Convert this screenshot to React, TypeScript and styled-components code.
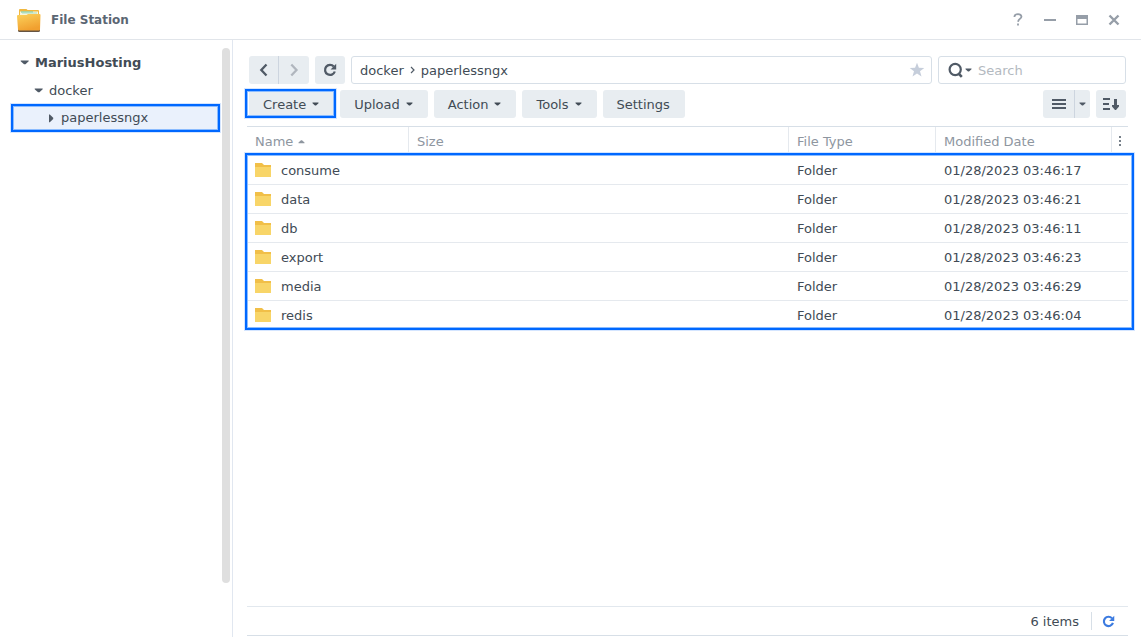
import React from "react";
import styled, { createGlobalStyle, css } from "styled-components";

const GlobalStyle = createGlobalStyle`
  * { box-sizing: border-box; }
  body {
    margin: 0;
    background: #fff;
    color: #414b55;
    font: 13px/28px Verdana, "DejaVu Sans", sans-serif;
  }
  button, input { font: inherit; color: inherit; }
  button { border: 0; margin: 0; padding: 0; background: none; cursor: pointer; }
  ul { list-style: none; margin: 0; padding: 0; }
  svg { display: block; flex: none; }
`;

const highlight = css`
  &::after {
    content: "";
    position: absolute;
    border: 2px solid #0068ff;
    box-shadow: 0 0 0 1px #d4e5ff, inset 0 0 0 1px #8bbcff;
    pointer-events: none;
  }
`;

const Label = styled.span`
  display: block;
  padding-top: 2px;
  line-height: 26px;
`;

const Window = styled.div`
  display: flex;
  flex-direction: column;
  min-height: 100vh;
`;

const TitleBar = styled.header`
  display: flex;
  align-items: center;
  height: 40px;
  padding: 0 18px 0 16px;
  border-bottom: 1px solid #e1e5ea;
`;

const Title = styled.h1`
  flex: 1;
  margin: 0 0 0 9px;
  font-size: 12px;
  line-height: 20px;
  font-weight: bold;
  color: #5b6673;
`;

const WindowControls = styled.div`
  display: flex;
  gap: 14px;
  color: #969ea8;
`;

const WindowButton = styled.button`
  display: flex;
  align-items: center;
  justify-content: center;
  width: 18px;
  height: 20px;
`;

const Body = styled.div`
  display: flex;
  flex: 1;
`;

const Sidebar = styled.nav`
  display: flex;
  flex: none;
  width: 233px;
  padding: 8px 2px 0 12px;
  border-right: 1px solid #e1e7f0;
`;

const Tree = styled.ul`
  flex: 1;
`;

const TreeItem = styled.li<{ $level: number; $selected?: boolean }>`
  position: relative;
  display: flex;
  align-items: center;
  gap: 6px;
  height: 28px;
  margin-right: 3px;
  padding-left: ${(p) => 8 + p.$level * 14}px;
  font-weight: ${(p) => (p.$level === 0 ? "bold" : "normal")};
  background: ${(p) => (p.$selected ? "#eaf1fc" : "none")};
  ${(p) => p.$selected && highlight}
  &::after { inset: 0 -1px; }
`;

const TreeLink = styled.a`
  color: inherit;
  text-decoration: none;
`;

const ScrollThumb = styled.div`
  width: 8px;
  margin-bottom: 54px;
  border-radius: 4px;
  background: #dfdfdf;
`;

const Main = styled.main`
  display: flex;
  flex: 1;
  flex-direction: column;
  min-width: 0;
  padding: 16px 13px 1px 14px;
`;

const Bar = styled.div`
  display: flex;
  gap: 6px;
  height: 28px;
  margin: 0 2px 6px;
`;

const Spacer = styled.div`
  flex: 1;
`;

const ButtonGroup = styled.div`
  display: flex;
  overflow: hidden;
  border-radius: 3px;
`;

const IconButton = styled.button<{ $width?: number; $divided?: boolean }>`
  display: flex;
  align-items: center;
  justify-content: center;
  width: ${(p) => p.$width ?? 30}px;
  height: 28px;
  border-radius: ${(p) => (p.$divided === undefined ? 3 : 0)}px;
  border-left: ${(p) => (p.$divided ? "1px solid #cdd5df" : "0")};
  background: #e8edf1;
  color: #505a66;
`;

const ToolButton = styled.button<{ $highlighted?: boolean }>`
  position: relative;
  display: flex;
  align-items: center;
  gap: 6px;
  height: 28px;
  padding: 0 15px 0 14px;
  border-radius: 3px;
  background: #e8edf1;
  ${(p) => p.$highlighted && highlight}
  &::after { inset: -1px -2px 0 -4px; }
`;

const PathField = styled.div`
  display: flex;
  flex: 1;
  align-items: center;
  gap: 6px;
  padding: 0 6px 0 8px;
  border: 1px solid #d7dfe7;
  border-radius: 3px;
`;

const SearchField = styled.label`
  display: flex;
  align-items: center;
  gap: 2px;
  width: 188px;
  padding-left: 9px;
  border: 1px solid #d7dfe7;
  border-radius: 3px;
  color: #505a66;
`;

const SearchInput = styled.input`
  flex: 1;
  min-width: 0;
  height: 26px;
  margin-left: 4px;
  padding: 2px 0 0;
  border: 0;
  outline: 0;
  background: none;
  &::placeholder { color: #b3b9c0; opacity: 1; }
`;

const TableFrame = styled.div`
  position: relative;
  margin-top: 2px;
  ${highlight}
  &::after { inset: 27px -6px 0 -2px; }
`;

const FileTable = styled.table`
  width: 100%;
  border-collapse: separate;
  border-spacing: 0;
  table-layout: fixed;
  border-top: 1px solid #d7dfe7;
`;

const HeadCell = styled.th<{ $width?: number }>`
  width: ${(p) => (p.$width ? `${p.$width}px` : "auto")};
  height: 29px;
  padding: 0 0 0 8px;
  border-right: 1px solid #e5e9ee;
  text-align: left;
  font-weight: normal;
  color: #8e969f;
  &:last-child { border-right: 0; padding-left: 7px; }
`;

const HeadLabel = styled.span`
  display: flex;
  align-items: center;
  gap: 5px;
`;

const Row = styled.tr`
  > td { border-bottom: 1px solid #e5e9ee; }
  &:last-child > td { border-bottom-color: transparent; }
`;

const Cell = styled.td`
  height: 29px;
  padding: 0 0 0 8px;
  white-space: nowrap;
`;

const FileName = styled.span`
  display: flex;
  align-items: center;
  gap: 10px;
`;

const StatusBar = styled.footer`
  display: flex;
  align-items: center;
  justify-content: flex-end;
  height: 30px;
  margin-top: auto;
  border-top: 1px solid #e2e8ee;
  border-bottom: 1px solid #d7dfe7;
`;

const Refresh = styled.button`
  display: flex;
  align-items: center;
  height: 18px;
  margin: 0 13px 0 12px;
  padding-left: 10px;
  border-left: 1px solid #d7dfe7;
  color: #3c7be0;
`;

const Caret = () => (
  <svg width="7" height="4" viewBox="0 0 7 4" fill="currentColor" aria-hidden="true">
    <path d="M.5.500h6v.7L4 3.500H3L.5 1.200z" />
  </svg>
);

const TreeArrow = ({ open }: { open: boolean }) => (
  <svg width={open ? 9 : 7} height="9" viewBox={open ? "0 0 9 9" : "0 0 7 9"} fill="#505a66" aria-hidden="true">
    <path d={open ? "M.7 2.500h8v.8L5.500 6.200H4L.7 3.300z" : "M1 .5h.8l3.400 3.200v1.200L1.800 8.200H1z"} />
  </svg>
);

const ReloadIcon = ({ size = 14 }: { size?: number }) => (
  <svg width={size} height={size} viewBox="0 0 14 14" fill="none" aria-hidden="true">
    <path d="M10.8 3.600A5 5 0 1 0 11.800 8.500" stroke="currentColor" strokeWidth="2.300" />
    <path d="M13.200.8v5.700H7.600z" fill="currentColor" />
  </svg>
);

const Chevron = ({ left }: { left?: boolean }) => (
  <svg width="10" height="14" viewBox="0 0 10 14" fill="none" stroke={left ? "#505a66" : "#b0b6be"} strokeWidth="2.300" aria-hidden="true">
    <path d={left ? "M7.500 1.500 2.300 7l5.200 5.500" : "M2.300 1.500 7.500 7l-5.200 5.500"} />
  </svg>
);

const FolderIcon = () => (
  <svg width="16" height="14" viewBox="0 0 16 14" aria-hidden="true">
    <path d="M0 0h7l2 2h7v12H0z" fill="#f1bf48" />
    <path d="M0 4h16v10H0z" fill="#f8d568" />
  </svg>
);

const AppIcon = () => (
  <svg width="26" height="26" viewBox="0 0 26 26" aria-hidden="true">
    <defs>
      <linearGradient id="folderFront" x1="0" y1="0" x2=".4" y2="1">
        <stop offset="0" stopColor="#fbd25c" />
        <stop offset="1" stopColor="#f1a02f" />
      </linearGradient>
    </defs>
    <path d="M3 3q0-1 1-1h6q1 0 1.500 1H22q1 0 1 1v6H3z" fill="#f0b840" />
    <path d="M4 4.500h18V9H4z" fill="#f7f5dc" />
    <path d="M5 4.500h12v1H5z" fill="#69c8a5" />
    <path d="M6 5.500h15v1H6z" fill="#a9dcc0" />
    <path d="M2 22h22v1.500q0 1.500-1.500 1.500h-19Q2 25 2 23.500z" fill="#655443" />
    <path d="M1 9q0-1 1-1h8.500L12 7h11.500q1 0 1 1L24 22.500q0 1-1 1H3q-1 0-1-1z" fill="url(#folderFront)" />
  </svg>
);

const tools = ["Create", "Upload", "Action", "Tools"];

const files = [
  { name: "consume", modified: "01/28/2023 03:46:17" },
  { name: "data", modified: "01/28/2023 03:46:21" },
  { name: "db", modified: "01/28/2023 03:46:11" },
  { name: "export", modified: "01/28/2023 03:46:23" },
  { name: "media", modified: "01/28/2023 03:46:29" },
  { name: "redis", modified: "01/28/2023 03:46:04" },
];

export default function App() {
  return (
    <Window>
      <GlobalStyle />
      <TitleBar>
        <AppIcon />
        <Title>File Station</Title>
        <WindowControls>
          <WindowButton aria-label="Help">
            <svg width="10" height="13" viewBox="0 0 10 13" fill="none" stroke="currentColor" strokeWidth="1.800">
              <path d="M1.500 4V3.200Q2 1.200 5 1.200T8.500 3.600Q8.500 4.800 7 5.700T5 8.800M5 10.500v2" />
            </svg>
          </WindowButton>
          <WindowButton aria-label="Minimize">
            <svg width="12" height="2" viewBox="0 0 12 2"><path d="M0 0h12v2H0z" fill="currentColor" /></svg>
          </WindowButton>
          <WindowButton aria-label="Maximize">
            <svg width="12" height="10" viewBox="0 0 12 10">
              <path d="M0 0h12v10H0zM1.500 4v4.500h9V4z" fill="currentColor" fillRule="evenodd" />
            </svg>
          </WindowButton>
          <WindowButton aria-label="Close">
            <svg width="12" height="12" viewBox="0 0 12 12" stroke="currentColor" strokeWidth="2.400">
              <path d="m1.500 1.500 9 9m0-9-9 9" />
            </svg>
          </WindowButton>
        </WindowControls>
      </TitleBar>
      <Body>
        <Sidebar aria-label="Folders">
          <Tree>
            <TreeItem $level={0}><TreeArrow open /><TreeLink href="#root"><Label>MariusHosting</Label></TreeLink></TreeItem>
            <TreeItem $level={1}><TreeArrow open /><TreeLink href="#docker"><Label>docker</Label></TreeLink></TreeItem>
            <TreeItem $level={2} $selected><TreeArrow open={false} /><TreeLink href="#paperlessngx">paperlessngx</TreeLink></TreeItem>
          </Tree>
          <ScrollThumb />
        </Sidebar>
        <Main>
          <Bar>
            <ButtonGroup>
              <IconButton $divided={false} $width={29} aria-label="Back"><Chevron left /></IconButton>
              <IconButton $divided $width={31} aria-label="Forward"><Chevron /></IconButton>
            </ButtonGroup>
            <IconButton aria-label="Reload"><ReloadIcon /></IconButton>
            <PathField>
              <Label>docker</Label>
              <svg width="5" height="8" viewBox="0 0 5 8" fill="none" stroke="#505a66" strokeWidth="1.200"><path d="m1 1 3 3-3 3" /></svg>
              <Label>paperlessngx</Label>
              <Spacer />
              <button aria-label="Favorite">
                <svg width="16" height="16" viewBox="0 0 16 16" fill="#c6cedb">
                  <path d="m8 .7 1.900 5.100 5.400.2-4.300 3.300 1.500 5.200L8 11.500l-4.500 3 1.500-5.200L.7 6l5.400-.2z" />
                </svg>
              </button>
            </PathField>
            <SearchField>
              <svg width="15" height="16" viewBox="0 0 15 16" fill="none" stroke="currentColor" strokeWidth="2.200">
                <circle cx="7.200" cy="7.500" r="5.600" />
                <path d="m10.500 11.500 3.300 3.300" strokeWidth="2.600" />
              </svg>
              <Caret />
              <SearchInput type="text" placeholder="Search" aria-label="Search" />
            </SearchField>
          </Bar>
          <Bar>
            {tools.map((tool, i) => (
              <ToolButton key={tool} $highlighted={i === 0}><Label>{tool}</Label><Caret /></ToolButton>
            ))}
            <ToolButton><Label>Settings</Label></ToolButton>
            <Spacer />
            <ButtonGroup>
              <IconButton $divided={false} $width={31} aria-label="List view">
                <svg width="14" height="10" viewBox="0 0 14 10"><path d="M0 0h14v2H0zm0 4h14v2H0zm0 4h14v2H0z" fill="currentColor" /></svg>
              </IconButton>
              <IconButton $divided $width={16} aria-label="View options"><Caret /></IconButton>
            </ButtonGroup>
            <IconButton aria-label="Sort">
              <svg width="16" height="12" viewBox="0 0 16 12" fill="currentColor">
                <path d="M0 0h7v2H0zm0 5h6v2H0zm0 5h7v2H0zM11 1h3v6h2v1.500L13 12h-1L9 8.500V7h2z" />
              </svg>
            </IconButton>
          </Bar>
          <TableFrame>
            <FileTable>
              <thead>
                <tr>
                  <HeadCell $width={162}>
                    <HeadLabel>
                      Name
                      <svg width="7" height="4" viewBox="0 0 7 4" fill="currentColor"><path d="M.5 3.300v-.7L3 .3h1l2.500 2.300v.7z" /></svg>
                    </HeadLabel>
                  </HeadCell>
                  <HeadCell>Size</HeadCell>
                  <HeadCell $width={147}>File Type</HeadCell>
                  <HeadCell $width={176}>Modified Date</HeadCell>
                  <HeadCell $width={16}>
                    <button aria-label="Columns">
                      <svg width="2" height="10" viewBox="0 0 2 10" fill="#77808a"><path d="M0 0h2v2H0zm0 4h2v2H0zm0 4h2v2H0z" /></svg>
                    </button>
                  </HeadCell>
                </tr>
              </thead>
              <tbody>
                {files.map((file) => (
                  <Row key={file.name}>
                    <Cell><FileName><FolderIcon /><Label>{file.name}</Label></FileName></Cell>
                    <Cell />
                    <Cell><Label>Folder</Label></Cell>
                    <Cell><Label>{file.modified}</Label></Cell>
                    <Cell />
                  </Row>
                ))}
              </tbody>
            </FileTable>
          </TableFrame>
          <StatusBar>
            <Label>6 items</Label>
            <Refresh aria-label="Refresh"><ReloadIcon size={13} /></Refresh>
          </StatusBar>
        </Main>
      </Body>
    </Window>
  );
}
